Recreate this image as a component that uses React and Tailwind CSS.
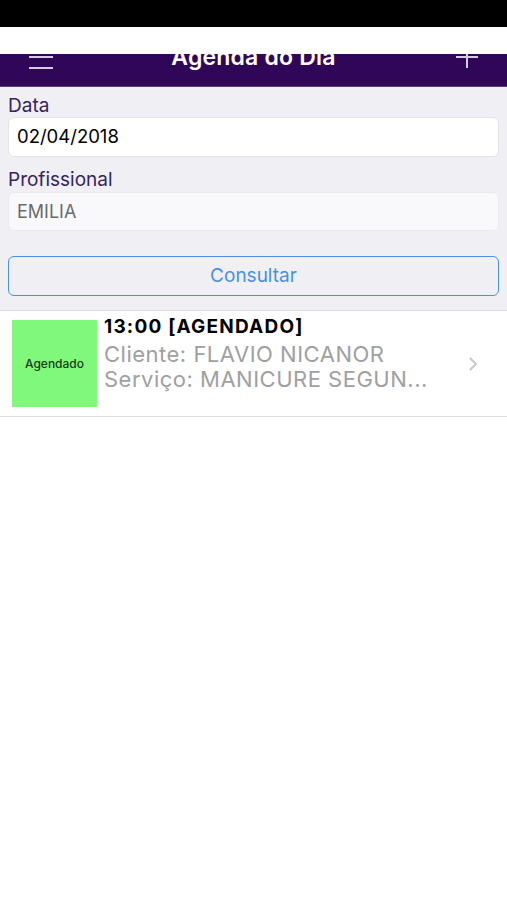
import React from "react";

export default function App() {
  const font = { fontFamily: "Inter, 'Liberation Sans', sans-serif" };
  return (
    <div className="w-[507px] h-[900px] bg-white flex flex-col" style={font}>
      <div className="h-[27px] bg-black shrink-0" />
      <div className="h-[27px] bg-white shrink-0" />
      <div className="h-[33px] bg-[#2f0658] overflow-hidden shrink-0 border-b border-[#5a3f7e]">
        <div className="-mt-[19px] h-[44px] grid grid-cols-[1fr_auto_1fr] items-center px-[29px]">
          <div className="flex">
            <svg width="24" height="24" viewBox="0 0 24 24">
              <line x1="0" y1="1" x2="24" y2="1" stroke="#d6cbe4" strokeWidth="2" />
              <line x1="0" y1="12" x2="24" y2="12" stroke="#d6cbe4" strokeWidth="2" />
              <line x1="0" y1="23" x2="24" y2="23" stroke="#d6cbe4" strokeWidth="2" />
            </svg>
          </div>
          <div className="text-white text-[23px] tracking-[0.2px] font-semibold leading-[28px]">Agenda do Dia</div>
          <div className="flex justify-end">
            <svg width="22" height="22" viewBox="0 0 22 22">
              <line x1="0" y1="11" x2="22" y2="11" stroke="#d6cbe4" strokeWidth="2" />
              <line x1="11" y1="0" x2="11" y2="22" stroke="#d6cbe4" strokeWidth="2" />
            </svg>
          </div>
        </div>
      </div>
      <div className="bg-[#efeff4] px-[8px] pt-[8px] pb-[14px] border-b border-[#dcdce0]">
        <div className="text-[19px] leading-[22px] text-[#36235c]">Data</div>
        <div className="h-[40px] bg-white rounded-[6px] flex items-center px-[8px] text-[18.5px] text-black border border-[#e4e4e8]">
          02/04/2018
        </div>
        <div className="mt-[12px] text-[19px] leading-[22px] text-[#36235c]">Profissional</div>
        <div className="mt-[1px] h-[39px] bg-[#f9f9fb] rounded-[6px] flex items-center px-[8px] text-[18px] text-[#6b6b6b] border border-[#ebebef]">
          EMILIA
        </div>
        <div className="mt-[25px] h-[40px] rounded-[6px] border-[1.5px] border-[#4a90e2] flex items-center justify-center text-[19px] text-[#4a8fe0]">
          Consultar
        </div>
      </div>
      <div className="flex items-start bg-white border-b border-[#dedede] h-[106px] pl-[12px] pr-[29px]">
        <div className="mt-[9px] w-[85px] h-[87px] bg-[#80f87c] flex items-center justify-center text-[12px] font-medium text-[#1a3a1a] shrink-0">
          Agendado
        </div>
        <div className="flex-1 ml-[7px] pt-[6px] min-w-0">
          <div className="text-[19px] leading-[20px] tracking-[1.2px] font-bold text-black">13:00 [AGENDADO]</div>
          <div className="text-[22px] leading-[25px] tracking-[0.5px] text-[#a0a0a0] mt-[4.5px]">Cliente: FLAVIO NICANOR</div>
          <div className="text-[22px] leading-[25px] tracking-[0.5px] text-[#a0a0a0]">Serviço: MANICURE SEGUN...</div>
        </div>
        <svg width="10" height="16" viewBox="0 0 10 16" className="shrink-0 self-center">
          <polyline points="2,2 8,8 2,14" fill="none" stroke="#c7c7cc" strokeWidth="2" />
        </svg>
      </div>
    </div>
  );
}
